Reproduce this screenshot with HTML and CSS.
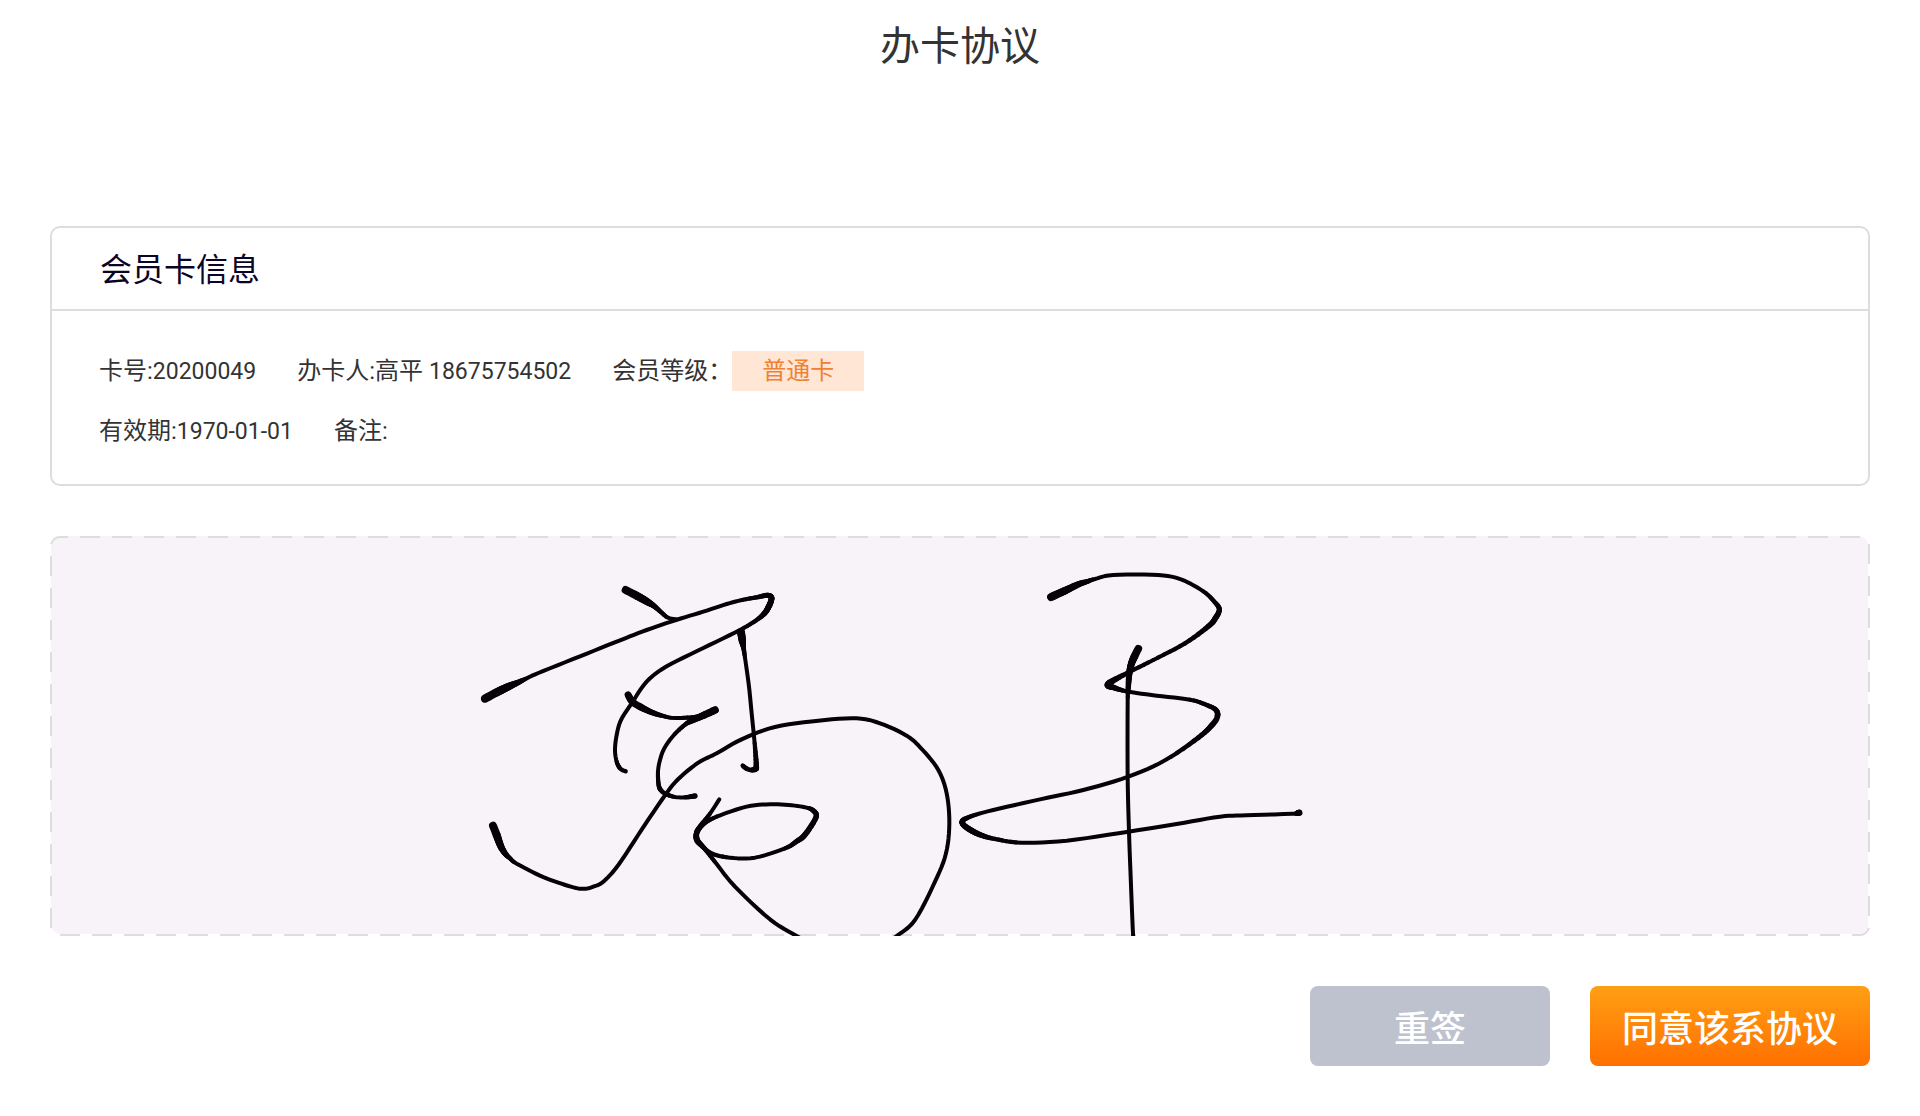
FILE: index.html
```html
<!DOCTYPE html>
<html lang="zh-CN">
<head>
  <meta charset="UTF-8" />
  <meta name="viewport" content="width=device-width, initial-scale=1" />
  <title>办卡协议</title>
  <link rel="stylesheet" href="styles.css">
</head>
<body>
  <h1 class="page-title">办卡协议</h1>

  <main class="content">
    <section class="card">
      <h2 class="card-title">会员卡信息</h2>
      <div class="card-body">
        <div class="info-row">
          <span>卡号:<span class="num">20200049</span></span>
          <span>办卡人:高平 <span class="num">18675754502</span></span>
          <span class="level">会员等级：<span class="badge">普通卡</span></span>
        </div>
        <div class="info-row">
          <span>有效期:<span class="num">1970-01-01</span></span>
          <span>备注:</span>
        </div>
      </div>
    </section>

    <svg class="sign-pad" viewBox="0 0 1820 400" role="img" aria-label="签名">
      <rect class="pad-bg" x="1" y="0" width="1817" height="398" rx="9" />
      <rect class="pad-border" x="1" y="1" width="1818" height="398" rx="9" />
      <g id="sign" class="sign" transform="translate(420 34) scale(0.33333)"></g>
    </svg>

    <div class="actions">
      <button type="button" class="btn btn-reset" id="reset-btn">重签</button>
      <button type="button" class="btn btn-agree">同意该系协议</button>
    </div>
  </main>

  <script src="sign.js"></script>
</body>
</html>
```

FILE: styles.css
```css
* {
  box-sizing: border-box;
}
body {
  margin: 0;
  background: #fff;
  color: #333;
  font-family: Roboto, "Noto Sans CJK SC", sans-serif;
  font-size: 24px;
}
.page-title {
  margin: 0;
  padding-top: 17px;
  line-height: 60px;
  font-size: 40px;
  font-weight: 400;
  text-align: center;
}
.content {
  padding: 149px 50px 50px;
}
.card {
  border: 2px solid #ddd;
  border-radius: 10px;
}
.card-title {
  margin: 0;
  padding: 18px 48px 15px;
  border-bottom: 2px solid #ddd;
  color: #0b0426;
  font-size: 32px;
  font-weight: 400;
  line-height: 48px;
}
.card-body {
  display: flex;
  flex-direction: column;
  gap: 20px;
  padding: 40px 47px 33px;
}
.info-row {
  display: flex;
  gap: 41px;
  line-height: 40px;
}
.num {
  font-size: 23px;
  line-height: 1;
}
.level {
  display: flex;
}
.badge {
  padding: 0 30px;
  background: #ffe6d5;
  color: #f08133;
}
.sign-pad {
  display: block;
  width: 100%;
  margin-top: 50px;
}
.pad-bg {
  fill: #f7f3f8;
}
.pad-border {
  fill: none;
  stroke: #ddd;
  stroke-width: 2;
  stroke-dasharray: 20 12;
  stroke-dashoffset: -20;
}
.sign {
  fill: none;
  stroke: #040205;
  stroke-linecap: round;
  stroke-linejoin: round;
}
.actions {
  display: flex;
  justify-content: flex-end;
  gap: 40px;
  margin-top: 50px;
}
.btn {
  height: 80px;
  border: 0;
  border-radius: 8px;
  color: #fff;
  font-family: inherit;
  font-size: 36px;
  font-weight: 500;
  cursor: pointer;
}
.btn-reset {
  width: 240px;
  background: #bec2cf;
}
.btn-agree {
  width: 280px;
  background: linear-gradient(#ff9f14, #ff7000);
}
```

FILE: sign.js
```js
// Each stroke is a list of [x, y, pen width]
const strokes = [
  [[467,60,24],[500,77,24],[530,94,22],[552,108,16],[575,128,13],[594,143,12],[618,148,12]],
  [[45,386,25],[80,367,25],[115,350,23],[145,337,17],[170,325,12],[205,309,12],[330,259,12],[450,211,12],[530,180,12],[618,150,12],[700,125,12],[770,102,12],[820,89,12],[860,82,13],[890,76,15],[903,80,16],[904,90,17],[897,108,18],[885,128,17],[860,150,13],[810,180,12],[700,234,12],[590,289,12],[530,335,12],[485,400,12],[453,450,12],[440,495,12],[435,540,12],[440,575,12],[451,596,13],[467,604,13]],
  [[474,374,20],[487,395,21],[510,410,21],[545,427,17],[580,438,13],[615,444,11],[690,439,14],[735,420,22]],
  [[735,420,22],[705,434,22],[670,450,18],[645,464,13],[610,497,12],[583,535,12],[570,570,12],[564,605,12],[566,645,13],[573,661,14],[588,672,14],[615,681,12],[645,682,12],[675,678,16]],
  [[813,186,24],[817,212,22],[821,236,14],[826,270,12],[837,350,12],[845,430,12],[854,520,12],[859,586,16],[856,597,17],[843,600,14],[830,596,14],[818,587,13]],
  [[69,767,24],[80,795,24],[92,828,21],[105,850,17],[120,865,13],[140,881,12],[210,917,12],[265,938,12],[318,954,12],[347,956,12],[370,950,12],[400,935,12],[445,885,12],[515,779,12],[585,676,12],[625,627,12],[685,578,12],[740,550,12],[815,508,12],[915,471,12],[1045,452,12],[1160,445,12],[1230,460,12],[1310,497,12],[1358,540,12],[1405,600,12],[1430,670,12],[1438,760,12],[1428,850,12],[1395,935,12],[1335,1050,12],[1280,1098,12],[1230,1135,12]],
  [[748,688,12],[720,731,12],[692,767,14],[680,788,16],[682,812,18],[705,837,14],[740,882,12],[795,950,12],[900,1048,12],[980,1098,12],[1040,1130,12]],
  [[682,812,16],[720,848,13],[780,863,12],[855,863,12],[945,835,12],[980,814,15],[1005,794,17],[1038,742,16],[1030,722,15],[1010,713,12],[965,706,12],[900,703,12],[830,710,12],[740,740,12],[700,763,13],[680,788,15]],
  [[1743,81,24],[1785,62,23],[1825,43,19],[1850,35,15],[1875,27,12],[1930,15,12],[2065,15,12],[2135,29,12],[2200,64,12],[2233,95,13],[2248,118,15],[2236,145,17],[2215,169,16],[2145,220,13],[2050,270,12],[1970,310,13],[1915,342,20],[1932,353,17],[1975,365,12],[2060,377,12],[2160,389,12],[2210,405,13],[2238,420,15],[2242,440,17],[2228,463,17],[2185,503,15],[2085,571,12],[1975,620,12],[1840,660,12],[1710,688,12],[1570,720,12],[1515,735,12],[1480,750,15],[1480,764,17],[1505,782,18],[1535,796,16],[1575,807,13],[1655,818,12],[1790,812,12],[1975,785,12],[2120,762,12],[2250,740,12],[2330,736,12],[2484,731,12]],
  [[2480,730,14],[2488,728,19]],
  [[2005,236,23],[1994,258,23],[1984,282,21],[1978,310,19],[1975,350,16],[1973,400,12],[1973,620,12],[1977,785,12],[1982,920,12],[1988,1070,12],[1991,1120,12]]
];

const sign = document.getElementById('sign');

// Catmull-Rom between b and c
function spline(a, b, c, d, t) {
  return 0.5 * (2 * b + (c - a) * t + (2 * a - 5 * b + 4 * c - d) * t * t + (3 * b - a - 3 * c + d) * t * t * t);
}

function addLine(points, width) {
  const line = document.createElementNS('http://www.w3.org/2000/svg', 'polyline');
  line.setAttribute('points', points.join(' '));
  line.setAttribute('stroke-width', width);
  sign.appendChild(line);
}

function drawStroke(points) {
  const steps = 6;
  let run = [[points[0][0], points[0][1]]];
  let width = points[0][2];
  for (let i = 0; i < points.length - 1; i++) {
    const a = points[i - 1] || points[i];
    const b = points[i];
    const c = points[i + 1];
    const d = points[i + 2] || c;
    for (let s = 1; s <= steps; s++) {
      const t = s / steps;
      const w = b[2] + (c[2] - b[2]) * t;
      // start a new line only when the pen width changes
      if (w !== width) {
        if (run.length > 1) addLine(run, width);
        run = [run[run.length - 1]];
        width = w;
      }
      run.push([spline(a[0], b[0], c[0], d[0], t), spline(a[1], b[1], c[1], d[1], t)]);
    }
  }
  addLine(run, width);
}

strokes.forEach(drawStroke);

document.getElementById('reset-btn').addEventListener('click', () => {
  sign.replaceChildren();
});
```
